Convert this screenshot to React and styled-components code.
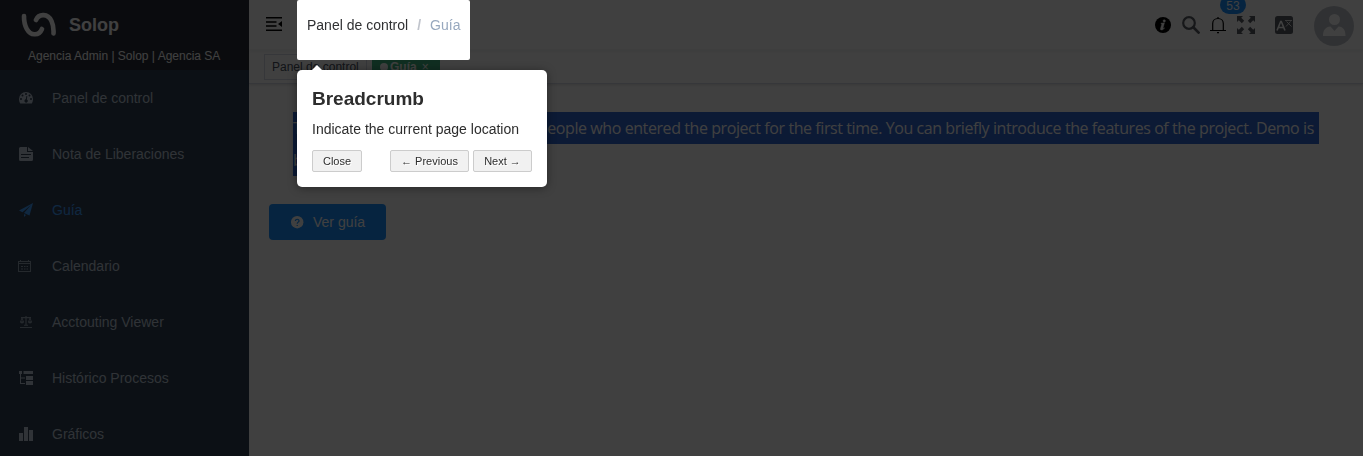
import React from "react";
import styled, { createGlobalStyle } from "styled-components";

const GlobalStyle = createGlobalStyle`
  * { box-sizing: border-box; }
  body {
    margin: 0;
    overflow: hidden;
    background: #fff;
    font-family: "Liberation Sans", Arial, sans-serif;
  }
`;

const Page = styled.div`
  display: flex;
  height: 456px;
  overflow: hidden;
`;

const Sidebar = styled.aside`
  width: 249px;
  flex: none;
  overflow: hidden;
  background: #304156;
`;

const Brand = styled.div`
  height: 70px;
  background: #2b2f3a;
  color: #fff;
`;

const BrandRow = styled.div`
  display: flex;
  align-items: center;
  gap: 13px;
  height: 49px;
  padding-left: 20px;
`;

const BrandName = styled.h1`
  margin: 0;
  font-size: 18px;
  line-height: 50px;
`;

const BrandRole = styled.div`
  padding-left: 28px;
  font-size: 12px;
  line-height: 14px;
  white-space: nowrap;
`;

const MenuItem = styled.a`
  display: flex;
  align-items: center;
  gap: 19px;
  height: 56px;
  padding-left: 19px;
  font-size: 14px;
  color: ${(p) => (p.$active ? "#409eff" : "#bfcbd9")};

  svg {
    width: 14px;
    height: 14px;
    flex: none;
    overflow: visible;
    fill: currentColor;
    opacity: ${(p) => (p.$faint ? 0.7 : 1)};
  }
`;

const Main = styled.main`
  flex: 1;
  min-width: 0;
`;

const Navbar = styled.header`
  display: flex;
  align-items: flex-start;
  height: 50px;
  box-shadow: 0 1px 4px rgba(0, 21, 41, 0.08);
`;

const Hamburger = styled.button`
  display: flex;
  width: 48px;
  padding: 17px 0 0 17px;
  border: 0;
  background: none;
`;

const BreadcrumbStage = styled.nav`
  position: relative;
  z-index: 11;
  display: flex;
  width: 173px;
  height: 60px;
  flex: none;
  padding-left: 10px;
  border-radius: 2px;
  background: #fff;
  font-size: 14px;
  line-height: 50px;
  color: #303133;
  white-space: nowrap;
`;

const Separator = styled.span`
  margin: 0 9px;
  font-weight: bold;
  color: #c0c4cc;
`;

const CurrentCrumb = styled.span`
  color: #97a8be;
`;

const Popover = styled.section`
  position: absolute;
  top: 70px;
  left: 0;
  width: 250px;
  height: 117px;
  padding: 15px;
  border-radius: 5px;
  background: #fff;
  box-shadow: 0 1px 10px rgba(0, 0, 0, 0.4);
  color: #2d2d2d;
  line-height: normal;

  &::before {
    content: "";
    position: absolute;
    top: -10px;
    left: 15px;
    border: 5px solid transparent;
    border-bottom-color: #fff;
  }
`;

const PopoverTitle = styled.h2`
  margin: 0 0 4px;
  font-size: 19px;
  line-height: 27px;
`;

const PopoverText = styled.p`
  margin: 0;
  font-size: 14px;
  line-height: 26px;
`;

const PopoverFooter = styled.div`
  display: flex;
  justify-content: space-between;
  margin-top: 8px;
`;

const StepButtons = styled.div`
  display: flex;
  gap: 4px;
`;

const StepButton = styled.button`
  width: ${(p) => p.$width}px;
  height: 22px;
  padding: 0;
  border: 1px solid #ccc;
  border-radius: 2px;
  background: #f1f1f1;
  color: #2d2d2d;
  font: 11px/18px "Liberation Sans", Arial, sans-serif;
  text-shadow: 1px 1px 0 #fff;
  white-space: nowrap;
`;

const Tools = styled.div`
  display: flex;
  align-items: center;
  height: 50px;
  margin-left: auto;
  padding-right: 9px;

  svg { display: block; }
`;

const Tool = styled.div`
  position: relative;
  margin-right: ${(p) => p.$after}px;
`;

const Badge = styled.span`
  position: absolute;
  left: 11px;
  top: -20px;
  width: 26px;
  height: 18px;
  border-radius: 9px;
  background: #1890ff;
  color: #fff;
  font-size: 12px;
  line-height: 21px;
  text-align: center;
`;

const Avatar = styled.div`
  width: 40px;
  height: 40px;
  margin-top: 2px;
  border-radius: 50%;
  background: #c0c4cc;
`;

const TagsBar = styled.div`
  display: flex;
  gap: 5px;
  height: 34px;
  padding: 4px 0 0 15px;
  border-bottom: 1px solid #d8dce5;
  box-shadow: 0 1px 3px rgba(0, 0, 0, 0.12), 0 0 3px rgba(0, 0, 0, 0.04);
`;

const Tag = styled.span`
  display: flex;
  align-items: center;
  width: ${(p) => p.$width}px;
  height: 26px;
  padding: 0 7px;
  border: 1px solid ${(p) => (p.$active ? "#42b983" : "#d8dce5")};
  background: ${(p) => (p.$active ? "#42b983" : "#fff")};
  color: ${(p) => (p.$active ? "#fff" : "#495060")};
  font-size: 12px;
  line-height: 28px;
  font-weight: ${(p) => (p.$active ? "bold" : "normal")};
  white-space: nowrap;
`;

const Dot = styled.i`
  width: 8px;
  height: 8px;
  margin-right: 2px;
  border-radius: 50%;
  background: #fff;
`;

const TagClose = styled.span`
  margin-left: 5px;
  font-weight: normal;
`;

const Content = styled.div`
  padding: 28px 20px 0;
`;

const Intro = styled.p`
  margin: 0;
  padding: 0 24px;
  font-family: "Open Sans", "Noto Sans", sans-serif;
  font-size: 16px;
  line-height: 33px;
  letter-spacing: -0.28px;
  color: #fff;
  white-space: nowrap;
`;

const SelectedLine = styled.span`
  display: block;
  width: ${(p) => p.$width}px;
  height: 32px;
  background: #3367d1;
`;

const Tight = styled.span`
  letter-spacing: -0.42px;
`;

const GuideButton = styled.button`
  display: flex;
  align-items: center;
  gap: 9px;
  width: 117px;
  height: 36px;
  margin-top: 28px;
  padding: 0 0 0 22px;
  border: 0;
  border-radius: 4px;
  background: #1890ff;
  color: #fff;
  font: 14px "Liberation Sans", Arial, sans-serif;
`;

const Overlay = styled.div`
  position: fixed;
  inset: 0;
  z-index: 10;
  background: rgba(0, 0, 0, 0.75);
`;

const Logo = () => (
  <svg width="36" height="28" viewBox="0 0 36 28" fill="none" stroke="#fff" strokeWidth="4.600" strokeLinecap="round">
    <path d="M4 5C3.800 15 8 23 14.500 23.300C18 23.500 20.500 21.500 22 18" />
    <path d="M16 9C17.500 5.500 20 3.900 23.500 4.100C31 4.500 34 13 33.500 22.500" />
  </svg>
);

const icons = {
  dashboard: (
    <svg viewBox="0 0 14 14">
      <path fillRule="evenodd" d="M7 1a7 7 0 0 0-7 7c0 1.800.5 3.200 1.200 4.400h11.600C13.500 11.200 14 9.800 14 8a7 7 0 0 0-7-7ZM7 2a1 1 0 1 1 0 2 1 1 0 0 1 0-2ZM3.500 3.500a1 1 0 1 1 0 2 1 1 0 0 1 0-2ZM2 7a1 1 0 1 1 0 2 1 1 0 0 1 0-2ZM12 7a1 1 0 1 1 0 2 1 1 0 0 1 0-2ZM10.500 3.500a1 1 0 1 1 0 2 1 1 0 0 1 0-2ZM7.400 5l.9.200-.5 3.200a1.700 1.700 0 1 1-1-.1Z" />
    </svg>
  ),
  note: (
    <svg viewBox="0 0 14 14">
      <path fillRule="evenodd" d="M1.500 0H8v5h6v7.500a1.500 1.500 0 0 1-1.500 1.500h-11A1.500 1.500 0 0 1 0 12.500v-11A1.500 1.500 0 0 1 1.500 0ZM9 0l5 4H9ZM2 7v1h10V7ZM2 10v1h8v-1Z" />
    </svg>
  ),
  guide: (
    <svg viewBox="0 0 14 14">
      <path d="M14 0 0 7.500l3.500 1.700L12 2 5 10l5.500 2.500ZM5 11v3l2-2.100Z" />
    </svg>
  ),
  calendar: (
    <svg viewBox="0 0 14 14">
      <path fillRule="evenodd" d="M-1 2h2V1h1v1h7V1h1v1h2v11H-1ZM0 3v1h11V3ZM0 5v7h11V5Z" />
      <path d="M2 7h2v1H2ZM5 7h1.500v1H5ZM7.500 7H9v1H7.500ZM2 9.500h2v1H2ZM5 9.500h1.500v1H5ZM7.500 9.500H9v1H7.500Z" />
    </svg>
  ),
  scale: (
    <svg viewBox="0 0 14 14">
      <path d="M1 12h12v1H1ZM6.400 1h1.200v9H6.400ZM2 2h10v1.200H2ZM5 9.700h4v1H5Z" />
      <path d="M3 3 1.500 7h3L3 3ZM11 3 9.500 7h3L11 3Z" fill="none" stroke="currentColor" strokeWidth=".9" />
      <path d="M1 6.500h4a2 2 0 0 1-4 0ZM9 6.500h4a2 2 0 0 1-4 0Z" />
    </svg>
  ),
  tree: (
    <svg viewBox="0 0 14 14">
      <path d="M0 0h3v3H2v3.500h4v1H2V12h4v1H1V3H0ZM4.500 0H14v3H4.500ZM7 5h7v4H7ZM7 10h7v4H7Z" />
    </svg>
  ),
  chart: (
    <svg viewBox="0 0 14 14">
      <path d="M0 6h4v8H0ZM5 0h4v14H5ZM10 3h4v11h-4Z" />
    </svg>
  ),
};

const menu = [
  { label: "Panel de control", icon: "dashboard" },
  { label: "Nota de Liberaciones", icon: "note" },
  { label: "Guía", icon: "guide", active: true },
  { label: "Calendario", icon: "calendar", faint: true },
  { label: "Acctouting Viewer", icon: "scale", faint: true },
  { label: "Histórico Procesos", icon: "tree" },
  { label: "Gráficos", icon: "chart" },
];

const FoldIcon = () => (
  <svg width="16" height="14" viewBox="0 0 16 14">
    <path d="M0 0h16v1.500H0ZM0 4.200h10.500v1.500H0ZM0 8.300h10.500v1.500H0ZM0 12.500h16V14H0ZM16 4v6l-4-3Z" />
  </svg>
);

const InfoIcon = () => (
  <svg width="16" height="16" viewBox="0 0 16 16">
    <circle cx="8" cy="8" r="8" />
    <path d="M9.300 2.700a1.200 1.200 0 1 1-.1 2.400 1.200 1.200 0 0 1 .1-2.400ZM6 6.200l3.500-.4-1.500 5.400c-.1.500.3.500 1.300-.5l.3.300c-1.200 1.600-2.200 2-3 2-1.100 0-1.400-.6-1.100-1.500l1.200-4c.1-.5-.2-.7-.8-.8Z" fill="#fff" stroke="#fff" strokeWidth=".4" />
  </svg>
);

const SearchIcon = () => (
  <svg width="18" height="18" viewBox="0 0 18 18" fill="none" stroke="#5a5e66">
    <circle cx="7" cy="7" r="5.800" strokeWidth="2.200" />
    <path d="m11.300 11.300 5.300 5.300" strokeWidth="2.700" strokeLinecap="round" />
  </svg>
);

const BellIcon = () => (
  <svg width="18" height="18" viewBox="0 0 18 18" fill="none" stroke="#000" strokeWidth="1.200">
    <path d="M9 1v1.500M3.700 14V7.500C3.700 4.500 6 2.500 9 2.500s5.300 2 5.300 5V14M1 14.500h16" />
    <path d="M8 16.700h2" />
  </svg>
);

const ExpandIcon = () => (
  <svg width="18" height="18" viewBox="0 0 18 18" fill="#5a5e66">
    <path d="M0 0h6L4.200 1.800l3 3-2.400 2.400-3-3L0 6ZM18 0v6l-1.800-1.800-3 3-2.400-2.400 3-3L12 0ZM0 18v-6l1.800 1.800 3-3 2.400 2.400-3 3L6 18ZM18 18h-6l1.800-1.800-3-3 2.400-2.400 3 3L18 12Z" />
  </svg>
);

const LanguageIcon = () => (
  <svg width="18" height="18" viewBox="0 0 18 18" fill="none" stroke="#fff">
    <rect width="18" height="18" rx="2.500" fill="#5a5e66" stroke="none" />
    <path d="m2 14.500 3.700-9h.6l3.700 9M3.300 11.500h5.400" strokeWidth="1.600" />
    <path d="M10 4.500h7M11 10.500l4.500-5M11.500 5.500l5 5" strokeWidth=".8" />
  </svg>
);

const PersonIcon = () => (
  <svg width="40" height="40" viewBox="0 0 40 40" fill="#fff">
    <circle cx="20.500" cy="13.500" r="5.500" />
    <path d="M9 30c0-6 2.500-9 7.500-9.500l4 4.500 4-4.500C29.500 21 31.500 24 31.500 30Z" />
  </svg>
);

const QuestionIcon = () => (
  <svg width="13" height="13" viewBox="0 0 13 13">
    <circle cx="6.200" cy="6.200" r="6.200" fill="#fff" />
    <path d="M4.400 5c0-2.400 3.700-2.200 3.600-.1C8 6.200 6.200 6.100 6.200 7.800M6.200 8.900v1.200" fill="none" stroke="#1890ff" strokeWidth="1.200" />
  </svg>
);

export default function App() {
  return (
    <Page>
      <GlobalStyle />
      <Sidebar>
        <Brand>
          <BrandRow>
            <Logo />
            <BrandName>Solop</BrandName>
          </BrandRow>
          <BrandRole>Agencia Admin | Solop | Agencia SA</BrandRole>
        </Brand>
        {menu.map((item) => (
          <MenuItem key={item.label} $active={item.active} $faint={item.faint}>
            {icons[item.icon]}
            <span>{item.label}</span>
          </MenuItem>
        ))}
      </Sidebar>
      <Main>
        <Navbar>
          <Hamburger><FoldIcon /></Hamburger>
          <BreadcrumbStage>
            <span>Panel de control</span>
            <Separator>/</Separator>
            <CurrentCrumb>Guía</CurrentCrumb>
            <Popover>
              <PopoverTitle>Breadcrumb</PopoverTitle>
              <PopoverText>Indicate the current page location</PopoverText>
              <PopoverFooter>
                <StepButton $width={50}>Close</StepButton>
                <StepButtons>
                  <StepButton $width={79}>← Previous</StepButton>
                  <StepButton $width={59}>Next →</StepButton>
                </StepButtons>
              </PopoverFooter>
            </Popover>
          </BreadcrumbStage>
          <Tools>
            <Tool $after={11}><InfoIcon /></Tool>
            <Tool $after={9}><SearchIcon /></Tool>
            <Tool $after={10}><BellIcon /><Badge>53</Badge></Tool>
            <Tool $after={20}><ExpandIcon /></Tool>
            <Tool $after={21}><LanguageIcon /></Tool>
            <Avatar><PersonIcon /></Avatar>
          </Tools>
        </Navbar>
        <TagsBar>
          <Tag $width={103}>Panel de control</Tag>
          <Tag $width={68} $active><Dot />Guía<TagClose>×</TagClose></Tag>
        </TagsBar>
        <Content>
          <Intro>
            <SelectedLine $width={1026}>
              The guide page is useful for some p
              <Tight>eople who entered the project for the first time. You can briefly introduce the features of the project. Demo is</Tight>
            </SelectedLine>
            <SelectedLine $width={150}>based on driver.js.</SelectedLine>
          </Intro>
          <GuideButton><QuestionIcon />Ver guía</GuideButton>
        </Content>
      </Main>
      <Overlay />
    </Page>
  );
}
